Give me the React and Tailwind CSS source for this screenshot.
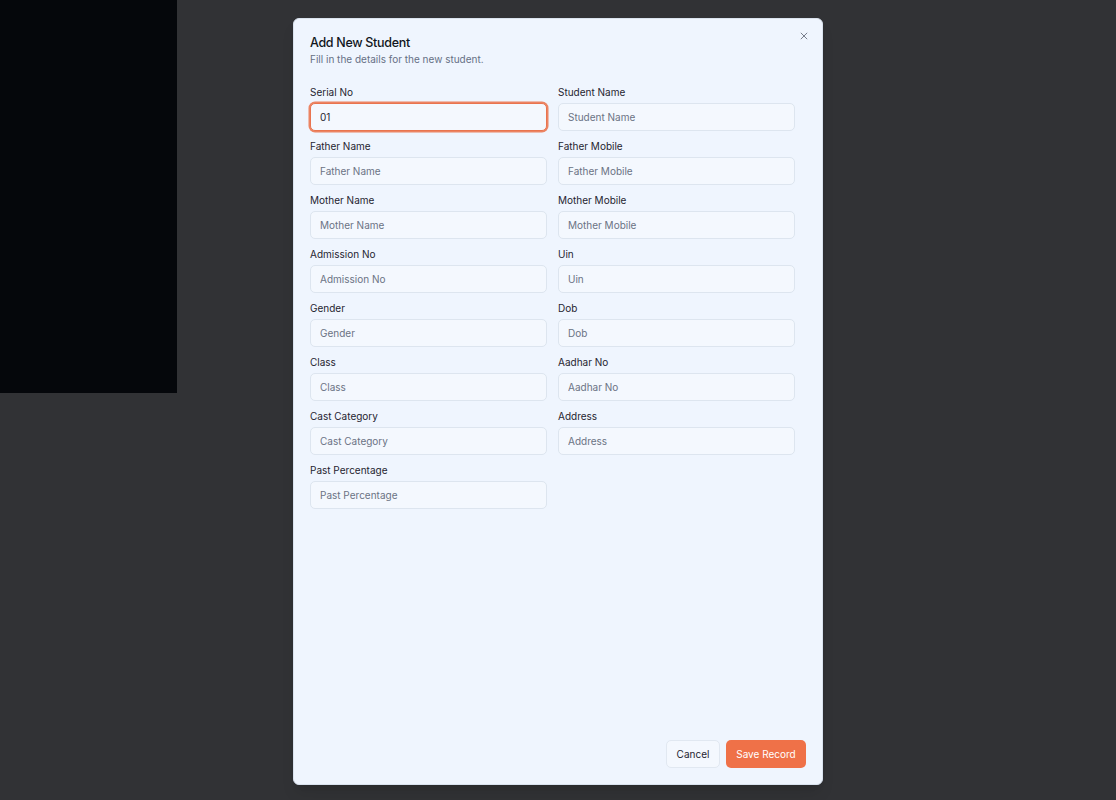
import React from 'react';

const FIELDS = [
  ['Serial No', 'Student Name'],
  ['Father Name', 'Father Mobile'],
  ['Mother Name', 'Mother Mobile'],
  ['Admission No', 'Uin'],
  ['Gender', 'Dob'],
  ['Class', 'Aadhar No'],
  ['Cast Category', 'Address'],
  ['Past Percentage'],
];

function Field({ label, value, focused }) {
  return (
    <div className="flex flex-col">
      <label className="text-[10px] leading-[15px] text-[#1f2430]">{label}</label>
      <input
        readOnly
        defaultValue={value}
        placeholder={label}
        className={
          focused
            ? 'mt-[3px] h-[28px] w-full rounded-[5px] border border-[#e9744f] bg-[#f4f8fe] px-[9px] text-[10px] text-[#1f2430] outline-none ring-[1.5px] ring-[#ec8463] placeholder:text-[#6b7384]'
            : 'mt-[3px] h-[28px] w-full rounded-[5px] border border-[#dde5ef] bg-[#f4f8fe] px-[9px] text-[10px] text-[#1f2430] outline-none placeholder:text-[#6b7384]'
        }
      />
    </div>
  );
}

export default function App() {
  return (
    <div className="relative h-[800px] w-full overflow-hidden bg-[#313235] font-['Inter',sans-serif]">
      {/* page behind the overlay */}
      <div className="h-[393px] w-[177px] bg-[#05070b]" />

      {/* dialog */}
      <div className="absolute left-[293px] top-[18px] flex h-[767px] w-[530px] flex-col rounded-[6px] border border-[#d9e2ee] bg-[#eff5fe] px-[16px] pb-[16px] pt-[15px] shadow-lg">
        <button type="button" className="absolute right-[13px] top-[12px] text-[#6b7280]" aria-label="Close">
          <svg width="10" height="10" viewBox="0 0 24 24" fill="none" stroke="currentColor" strokeWidth="2.2" strokeLinecap="round">
            <path d="M5 5l14 14M19 5L5 19" />
          </svg>
        </button>

        <h2 className="text-[12.5px] font-medium leading-[17px] tracking-tight text-[#111520]">Add New Student</h2>
        <p className="mt-[1px] text-[10px] leading-[15px] text-[#667085]">Fill in the details for the new student.</p>

        <div className="mt-[18px] grid grid-cols-[237px_237px] gap-x-[11px] gap-y-[8px]">
          {FIELDS.flat().map((label) => (
            <Field
              key={label}
              label={label}
              value={label === 'Serial No' ? '01' : undefined}
              focused={label === 'Serial No'}
            />
          ))}
        </div>

        <div className="mt-auto flex justify-end gap-[6px]">
          <button
            type="button"
            className="h-[28px] w-[54px] rounded-[5px] border border-[#e1e8f1] bg-[#f4f8fe] text-[10px] text-[#1f2430]"
          >
            Cancel
          </button>
          <button
            type="button"
            className="h-[28px] w-[80px] rounded-[5px] bg-[#ef7148] text-[10px] text-white"
          >
            Save Record
          </button>
        </div>
      </div>
    </div>
  );
}
